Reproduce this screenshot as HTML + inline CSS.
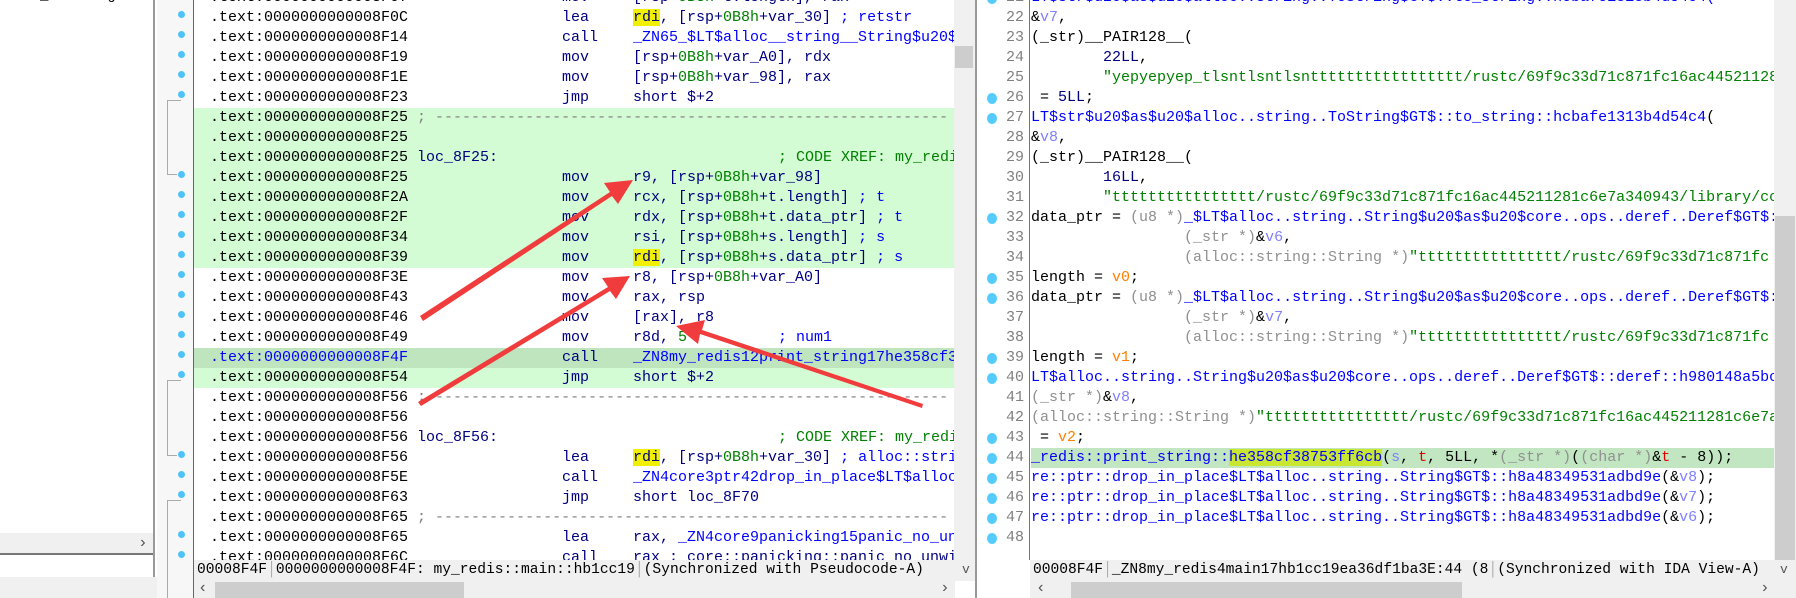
<!DOCTYPE html>
<html><head><meta charset="utf-8">
<style>
*{margin:0;padding:0;box-sizing:border-box}
body{width:1796px;height:598px;overflow:hidden;background:#fff;position:relative;font-family:"Liberation Mono",monospace;font-size:15px}
.a{position:absolute}
.r{position:absolute;height:20px;line-height:20px;white-space:pre;overflow:hidden}
.L{left:194px;width:760px}
.R{left:1031px;width:743px}
.L>span{position:absolute;top:0}
.ad{left:16px;color:#000}
.mn{left:368px;color:#000080}
.op{left:439px;color:#000080}
.cm{left:584px}
.nav{color:#000080}.grn{color:#008000}.blu{color:#0000ff}.gry{color:#808080}
.hy{background:#f0f000}
.lg{background:#d4fcd4}.dg{background:#bfe5bf}
.dot{position:absolute;width:7px;height:7px;border-radius:50%;background:#4fc3f7}
.rdot{position:absolute;width:10px;height:11px;border-radius:50%;background:#55ccff}
.ln{position:absolute;left:995px;width:29px;text-align:right;color:#808080;height:20px;line-height:20px}
.i{color:#0000ff}.v{color:#8080ff}.s{color:#008000}.g{color:#909090}.o{color:#ff8000}.k{color:#000080}.t{color:#e00000}
.sb{font-family:"Liberation Mono",monospace;font-size:14.6px;line-height:21px;color:#000;white-space:pre}
</style></head><body>
<div class="a" style="left:0;top:0;width:155px;height:598px;background:#fff"></div>
<div class="a" style="left:40px;top:-12px;font-size:14px">_&nbsp;&nbsp;&nbsp;&nbsp;&nbsp;&nbsp;&nbsp;g</div>
<div class="a" style="left:0;top:533px;width:154px;height:20px;background:#f0f0f0"></div>
<div class="a" style="left:138px;top:533px;font-size:16px;color:#555;line-height:20px">›</div>
<div class="a" style="left:0;top:553px;width:155px;height:2px;background:#777"></div>
<div class="a" style="left:0;top:577px;width:157px;height:21px;background:#f0f0f0"></div>
<div class="a" style="left:153px;top:0;width:2px;height:577px;background:#999"></div>
<div class="a" style="left:157px;top:0;width:36px;height:598px;background:#f7f7f7"></div>
<div class="a" style="left:193px;top:0;width:1px;height:598px;background:#666"></div>
<div class="a" style="left:167px;top:100px;width:1px;height:74px;background:#aaa"></div>
<div class="a" style="left:167px;top:100px;width:14px;height:1px;background:#aaa"></div>
<div class="a" style="left:167px;top:174px;width:10px;height:1px;background:#aaa"></div>
<div class="a" style="left:167px;top:380px;width:1px;height:75px;background:#aaa"></div>
<div class="a" style="left:167px;top:380px;width:14px;height:1px;background:#aaa"></div>
<div class="a" style="left:167px;top:455px;width:10px;height:1px;background:#aaa"></div>
<div class="a" style="left:167px;top:500px;width:1px;height:98px;background:#aaa"></div>
<div class="a" style="left:167px;top:500px;width:14px;height:1px;background:#aaa"></div>

<div class="r L" style="top:-12px"><span class="ad">.text:0000000000008F07</span><span class="mn">mov</span><span class="op">[rsp+<span class="grn">0B8h</span>+t.length], rax</span></div>
<div class="r L" style="top:8px"><span class="ad">.text:0000000000008F0C</span><span class="mn">lea</span><span class="op"><span class="hy">rdi</span>, [rsp+<span class="grn">0B8h</span>+var_30] <span class="blu">; retstr</span></span></div>
<div class="r L" style="top:28px"><span class="ad">.text:0000000000008F14</span><span class="mn">call</span><span class="op blu">_ZN65_$LT$alloc__string__String$u20$as$u20$</span></div>
<div class="r L" style="top:48px"><span class="ad">.text:0000000000008F19</span><span class="mn">mov</span><span class="op">[rsp+<span class="grn">0B8h</span>+var_A0], rdx</span></div>
<div class="r L" style="top:68px"><span class="ad">.text:0000000000008F1E</span><span class="mn">mov</span><span class="op">[rsp+<span class="grn">0B8h</span>+var_98], rax</span></div>
<div class="r L" style="top:88px"><span class="ad">.text:0000000000008F23</span><span class="mn">jmp</span><span class="op">short $+2</span></div>
<div class="r L lg" style="top:108px"><span class="ad">.text:0000000000008F25 <span class="gry">; ---------------------------------------------------------</span></span></div>
<div class="r L lg" style="top:128px"><span class="ad">.text:0000000000008F25</span></div>
<div class="r L lg" style="top:148px"><span class="ad">.text:0000000000008F25 <span class="nav">loc_8F25:</span></span><span class="cm grn">; CODE XREF: my_redis</span></div>
<div class="r L lg" style="top:168px"><span class="ad">.text:0000000000008F25</span><span class="mn">mov</span><span class="op">r9, [rsp+<span class="grn">0B8h</span>+var_98]</span></div>
<div class="r L lg" style="top:188px"><span class="ad">.text:0000000000008F2A</span><span class="mn">mov</span><span class="op">rcx, [rsp+<span class="grn">0B8h</span>+t.length] <span class="blu">; t</span></span></div>
<div class="r L lg" style="top:208px"><span class="ad">.text:0000000000008F2F</span><span class="mn">mov</span><span class="op">rdx, [rsp+<span class="grn">0B8h</span>+t.data_ptr] <span class="blu">; t</span></span></div>
<div class="r L lg" style="top:228px"><span class="ad">.text:0000000000008F34</span><span class="mn">mov</span><span class="op">rsi, [rsp+<span class="grn">0B8h</span>+s.length] <span class="blu">; s</span></span></div>
<div class="r L lg" style="top:248px"><span class="ad">.text:0000000000008F39</span><span class="mn">mov</span><span class="op"><span class="hy">rdi</span>, [rsp+<span class="grn">0B8h</span>+s.data_ptr] <span class="blu">; s</span></span></div>
<div class="r L" style="top:268px"><span class="ad">.text:0000000000008F3E</span><span class="mn">mov</span><span class="op">r8, [rsp+<span class="grn">0B8h</span>+var_A0]</span></div>
<div class="r L" style="top:288px"><span class="ad">.text:0000000000008F43</span><span class="mn">mov</span><span class="op">rax, rsp</span></div>
<div class="r L" style="top:308px"><span class="ad">.text:0000000000008F46</span><span class="mn">mov</span><span class="op">[rax], r8</span></div>
<div class="r L" style="top:328px"><span class="ad">.text:0000000000008F49</span><span class="mn">mov</span><span class="op">r8d, <span class="grn">5</span></span><span class="cm blu">; num1</span></div>
<div class="r L dg" style="top:348px"><span class="ad blu">.text:0000000000008F4F</span><span class="mn">call</span><span class="op blu">_ZN8my_redis12print_string17he358cf38</span></div>
<div class="r L lg" style="top:368px"><span class="ad">.text:0000000000008F54</span><span class="mn">jmp</span><span class="op">short $+2</span></div>
<div class="r L" style="top:388px"><span class="ad">.text:0000000000008F56 <span class="gry">; ---------------------------------------------------------</span></span></div>
<div class="r L" style="top:408px"><span class="ad">.text:0000000000008F56</span></div>
<div class="r L" style="top:428px"><span class="ad">.text:0000000000008F56 <span class="nav">loc_8F56:</span></span><span class="cm grn">; CODE XREF: my_redi</span></div>
<div class="r L" style="top:448px"><span class="ad">.text:0000000000008F56</span><span class="mn">lea</span><span class="op"><span class="hy">rdi</span>, [rsp+<span class="grn">0B8h</span>+var_30] <span class="blu">; alloc::string</span></span></div>
<div class="r L" style="top:468px"><span class="ad">.text:0000000000008F5E</span><span class="mn">call</span><span class="op blu">_ZN4core3ptr42drop_in_place$LT$alloc</span></div>
<div class="r L" style="top:488px"><span class="ad">.text:0000000000008F63</span><span class="mn">jmp</span><span class="op">short loc_8F70</span></div>
<div class="r L" style="top:508px"><span class="ad">.text:0000000000008F65 <span class="gry">; ---------------------------------------------------------</span></span></div>
<div class="r L" style="top:528px"><span class="ad">.text:0000000000008F65</span><span class="mn">lea</span><span class="op">rax, <span class="blu">_ZN4core9panicking15panic_no_unwind</span></span></div>
<div class="r L" style="top:548px"><span class="ad">.text:0000000000008F6C</span><span class="mn">call</span><span class="op">rax ; core::panicking::panic_no_unwind</span></div>

<div class="dot" style="left:178px;top:11px"></div><div class="dot" style="left:178px;top:31px"></div><div class="dot" style="left:178px;top:51px"></div><div class="dot" style="left:178px;top:71px"></div><div class="dot" style="left:178px;top:91px"></div>
<div class="dot" style="left:178px;top:171px"></div><div class="dot" style="left:178px;top:191px"></div><div class="dot" style="left:178px;top:211px"></div><div class="dot" style="left:178px;top:231px"></div><div class="dot" style="left:178px;top:251px"></div><div class="dot" style="left:178px;top:271px"></div><div class="dot" style="left:178px;top:291px"></div><div class="dot" style="left:178px;top:311px"></div><div class="dot" style="left:178px;top:331px"></div><div class="dot" style="left:178px;top:351px"></div><div class="dot" style="left:178px;top:371px"></div>
<div class="dot" style="left:178px;top:451px"></div><div class="dot" style="left:178px;top:471px"></div><div class="dot" style="left:178px;top:491px"></div><div class="dot" style="left:178px;top:531px"></div><div class="dot" style="left:178px;top:551px"></div>

<div class="a" style="left:954px;top:0;width:21px;height:560px;background:#f0f0f0"></div>
<div class="a" style="left:955px;top:46px;width:18px;height:22px;background:#cdcdcd"></div>
<div class="a sb" style="left:194px;top:560px;width:781px;height:21px;background:#f0f0f0;padding-left:3px">00008F4F<span style="color:#aaa">│</span>0000000000008F4F: my_redis::main::hb1cc19<span style="color:#aaa">│</span>(Synchronized with Pseudocode-A)</div>
<div class="a" style="left:962px;top:562px;color:#555;font-size:13px">v</div>
<div class="a" style="left:194px;top:581px;width:761px;height:17px;background:#f0f0f0"></div>
<div class="a" style="left:215px;top:582px;width:249px;height:16px;background:#cdcdcd"></div>
<div class="a" style="left:198px;top:579px;color:#555;font-size:16px">‹</div>
<div class="a" style="left:940px;top:579px;color:#555;font-size:16px">›</div>

<div class="a" style="left:975px;top:0;width:2px;height:598px;background:#999"></div>
<div class="a" style="left:1029px;top:0;width:1px;height:560px;background:#4080d0"></div>

<div class="r R" style="top:-12px"><span class="i">LT$str$u20$as$u20$alloc..string..ToString$GT$::to_string::hcbafe1313b4d54c4(</span></div>
<div class="r R" style="top:8px">&amp;<span class="v">v7</span>,</div>
<div class="r R" style="top:28px">(_str)__PAIR128__(</div>
<div class="r R" style="top:48px"><span class="k">        22LL</span>,</div>
<div class="r R" style="top:68px">        <span class="s">"yepyepyep_tlsntlsntlsnttttttttttttttttt/rustc/69f9c33d71c871fc16ac445211281c6e</span></div>
<div class="r R" style="top:88px"> = <span class="k">5LL</span>;</div>
<div class="r R" style="top:108px"><span class="i">LT$str$u20$as$u20$alloc..string..ToString$GT$::to_string::hcbafe1313b4d54c4</span>(</div>
<div class="r R" style="top:128px">&amp;<span class="v">v8</span>,</div>
<div class="r R" style="top:148px">(_str)__PAIR128__(</div>
<div class="r R" style="top:168px"><span class="k">        16LL</span>,</div>
<div class="r R" style="top:188px">        <span class="s">"tttttttttttttttt/rustc/69f9c33d71c871fc16ac445211281c6e7a340943/library/core</span></div>
<div class="r R" style="top:208px">data_ptr = <span class="g">(u8 *)</span><span class="i">_$LT$alloc..string..String$u20$as$u20$core..ops..deref..Deref$GT$::deref</span></div>
<div class="r R" style="top:228px">                 <span class="g">(_str *)</span>&amp;<span class="v">v6</span>,</div>
<div class="r R" style="top:248px">                 <span class="g">(alloc::string::String *)</span><span class="s">"tttttttttttttttt/rustc/69f9c33d71c871fc</span></div>
<div class="r R" style="top:268px">length = <span class="o">v0</span>;</div>
<div class="r R" style="top:288px">data_ptr = <span class="g">(u8 *)</span><span class="i">_$LT$alloc..string..String$u20$as$u20$core..ops..deref..Deref$GT$::deref</span></div>
<div class="r R" style="top:308px">                 <span class="g">(_str *)</span>&amp;<span class="v">v7</span>,</div>
<div class="r R" style="top:328px">                 <span class="g">(alloc::string::String *)</span><span class="s">"tttttttttttttttt/rustc/69f9c33d71c871fc</span></div>
<div class="r R" style="top:348px">length = <span class="o">v1</span>;</div>
<div class="r R" style="top:368px"><span class="i">LT$alloc..string..String$u20$as$u20$core..ops..deref..Deref$GT$::deref::h980148a5bc</span></div>
<div class="r R" style="top:388px"><span class="g">(_str *)</span>&amp;<span class="v">v8</span>,</div>
<div class="r R" style="top:408px"><span class="g">(alloc::string::String *)</span><span class="s">"tttttttttttttttt/rustc/69f9c33d71c871fc16ac445211281c6e7a3</span></div>
<div class="r R" style="top:428px"> = <span class="o">v2</span>;</div>
<div class="r R" style="top:448px;background:#c2e6c2"><span class="i">_redis::print_string::</span><span class="i" style="background:#c8e632">he358cf38753ff6cb</span>(<span class="v">s</span>, <span class="t">t</span>, 5LL, *<span class="g">(_str *)</span>(<span class="g">(char *)</span>&amp;<span class="t">t</span> - 8));</div>
<div class="r R" style="top:468px"><span class="i">re::ptr::drop_in_place$LT$alloc..string..String$GT$::h8a48349531adbd9e</span>(&amp;<span class="v">v8</span>);</div>
<div class="r R" style="top:488px"><span class="i">re::ptr::drop_in_place$LT$alloc..string..String$GT$::h8a48349531adbd9e</span>(&amp;<span class="v">v7</span>);</div>
<div class="r R" style="top:508px"><span class="i">re::ptr::drop_in_place$LT$alloc..string..String$GT$::h8a48349531adbd9e</span>(&amp;<span class="v">v6</span>);</div>

<div class="ln" style="top:-12px">21</div><div class="ln" style="top:8px">22</div><div class="ln" style="top:28px">23</div><div class="ln" style="top:48px">24</div><div class="ln" style="top:68px">25</div><div class="ln" style="top:88px">26</div><div class="ln" style="top:108px">27</div><div class="ln" style="top:128px">28</div><div class="ln" style="top:148px">29</div><div class="ln" style="top:168px">30</div><div class="ln" style="top:188px">31</div><div class="ln" style="top:208px">32</div><div class="ln" style="top:228px">33</div><div class="ln" style="top:248px">34</div><div class="ln" style="top:268px">35</div><div class="ln" style="top:288px">36</div><div class="ln" style="top:308px">37</div><div class="ln" style="top:328px">38</div><div class="ln" style="top:348px">39</div><div class="ln" style="top:368px">40</div><div class="ln" style="top:388px">41</div><div class="ln" style="top:408px">42</div><div class="ln" style="top:428px">43</div><div class="ln" style="top:448px">44</div><div class="ln" style="top:468px">45</div><div class="ln" style="top:488px">46</div><div class="ln" style="top:508px">47</div><div class="ln" style="top:528px">48</div>
<div class="rdot" style="left:987px;top:-7px"></div>
<div class="rdot" style="left:987px;top:93px"></div><div class="rdot" style="left:987px;top:113px"></div><div class="rdot" style="left:987px;top:213px"></div><div class="rdot" style="left:987px;top:273px"></div><div class="rdot" style="left:987px;top:293px"></div><div class="rdot" style="left:987px;top:353px"></div><div class="rdot" style="left:987px;top:373px"></div><div class="rdot" style="left:987px;top:433px"></div><div class="rdot" style="left:987px;top:453px"></div><div class="rdot" style="left:987px;top:473px"></div><div class="rdot" style="left:987px;top:493px"></div><div class="rdot" style="left:987px;top:513px"></div><div class="rdot" style="left:987px;top:533px"></div>

<div class="a" style="left:1774px;top:0;width:22px;height:560px;background:#f0f0f0"></div>
<div class="a" style="left:1775px;top:216px;width:20px;height:344px;background:#cdcdcd"></div>
<div class="a sb" style="left:1030px;top:560px;width:766px;height:21px;background:#f0f0f0;padding-left:3px">00008F4F<span style="color:#aaa">│</span>_ZN8my_redis4main17hb1cc19ea36df1ba3E:44 (8<span style="color:#aaa">│</span>(Synchronized with IDA View-A)</div>
<div class="a" style="left:1780px;top:562px;color:#555;font-size:13px">v</div>
<div class="a" style="left:1030px;top:581px;width:766px;height:17px;background:#f0f0f0"></div>
<div class="a" style="left:1071px;top:582px;width:391px;height:16px;background:#cdcdcd"></div>
<div class="a" style="left:1036px;top:579px;color:#555;font-size:16px">‹</div>
<div class="a" style="left:1760px;top:579px;color:#555;font-size:16px">›</div>

<svg class="a" style="left:0;top:0" width="1796" height="598">
<g fill="#f03c3c">
<polygon points="420,316 610,192 604,183 633,180 618,204 612,196 423,321"/>
<polygon points="418,402 608,287 602,278 630,276 616,299 610,291 421,406"/>
<polygon points="922,408 700,334 698,344 676,326 705,320 702,330 923,404"/>
</g>
</svg>
</body></html>
